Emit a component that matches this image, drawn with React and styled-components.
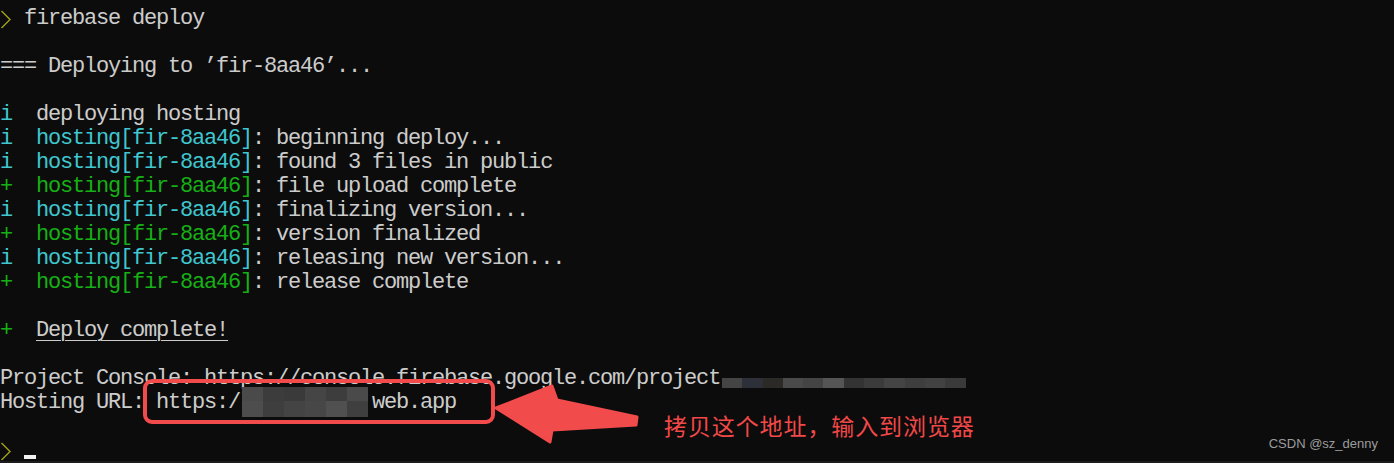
import styled, { createGlobalStyle } from 'styled-components';

const GlobalStyle = createGlobalStyle`
  html, body {
    margin: 0;
    padding: 0;
    background: #0c0c0c;
  }
`

const Screen = styled.div`
  position: relative;
  width: 1394px;
  height: 463px;
  overflow: hidden;
  background: #0c0c0c;
  box-sizing: border-box;
  padding-top: 7px;
  border-bottom: 2px solid #1c1c1c;
  font-family: "Liberation Mono", "DejaVu Sans Mono", monospace;
  font-size: 22px;
  letter-spacing: -1.2px;
  color: #cccccc;
`

const Line = styled.div`
  position: relative;
  height: 24px;
  line-height: 24px;
  white-space: pre;
`

const Cyan = styled.span`
  color: #3fc6cf;
`

const Green = styled.span`
  color: #16b016;
`

const Underlined = styled.span`
  text-decoration: underline;
  text-underline-offset: 4px;
  text-decoration-thickness: 1px;
`

const Prompt = styled.svg`
  display: inline-block;
  width: 12px;
  height: 24px;
  vertical-align: top;
  margin-right: 12px;
`

const Cursor = styled.span`
  display: inline-block;
  width: 12px;
  height: 4px;
  background: #f2f2f2;
  vertical-align: -3px;
`

const Mosaic = styled.div`
  position: absolute;
  left: ${p => p.$left}px;
  top: ${p => p.$top}px;
  display: grid;
  grid-template-columns: ${p => p.$cols};
  grid-auto-rows: ${p => p.$rows};
`

const Cell = styled.div`
  background: ${p => p.$c};
`

const Highlight = styled.div`
  position: absolute;
  left: 143px;
  top: 379px;
  width: 352px;
  height: 45px;
  box-sizing: border-box;
  border: 4px solid #f24b4b;
  border-radius: 9px;
`

const Arrow = styled.svg`
  position: absolute;
  left: 490px;
  top: 380px;
  width: 155px;
  height: 66px;
`

const Note = styled.div`
  position: absolute;
  left: 664px;
  top: 410px;
  font-family: "Noto Sans CJK SC", "Noto Sans", sans-serif;
  font-size: 23px;
  letter-spacing: 0.9px;
  color: #f24848;
  line-height: 30px;
`

const Watermark = styled.div`
  position: absolute;
  right: 16px;
  top: 436px;
  font-family: "Liberation Sans", Arial, sans-serif;
  font-size: 13px;
  letter-spacing: 0;
  color: #9c9c9c;
`

const PromptIcon = () => (
  <Prompt viewBox="0 0 12 24">
    <polyline points="1.5,4 10,12.5 1.5,21" fill="none" stroke="#a3a014" strokeWidth="1.4" />
  </Prompt>
)

const logLines = [
  ['i', 'beginning deploy...'],
  ['i', 'found 3 files in public'],
  ['+', 'file upload complete'],
  ['i', 'finalizing version...'],
  ['+', 'version finalized'],
  ['i', 'releasing new version...'],
  ['+', 'release complete'],
]

const consoleMask = ['#444444', '#2e3039', '#2b2a26', '#4a4a4a', '#444444', '#555555', '#333333', '#3b3b3b', '#444444', '#3e3e3e', '#424242', '#3a3a3a']
const urlMask = [
  '#4a4a4a', '#3c3c3c', '#3a3a3a', '#454545', '#3d3d3d', '#4a4a4a',
  '#4d4d4d', '#3e3e3e', '#444444', '#474747', '#505050', '#3f3f3f',
]

function App() {
  return (
    <>
      <GlobalStyle />
      <Screen>
        <Line><PromptIcon />firebase deploy</Line>
        <Line> </Line>
        <Line>=== Deploying to ’fir-8aa46’...</Line>
        <Line> </Line>
        <Line><Cyan>i</Cyan>  deploying hosting</Line>
        {logLines.map(([mark, text], i) => {
          const Tone = mark === '+' ? Green : Cyan
          return (
            <Line key={i}>
              <Tone>{mark}  hosting[fir-8aa46]</Tone>: {text}
            </Line>
          )
        })}
        <Line> </Line>
        <Line><Green>+</Green>  <Underlined>Deploy complete!</Underlined></Line>
        <Line> </Line>
        <Line>
          Project Console: https://console.firebase.google.com/project.
          <Mosaic $left={722} $top={11} $cols="repeat(12, 20.3px)" $rows="10px">
            {consoleMask.map((c, i) => <Cell key={i} $c={c} />)}
          </Mosaic>
        </Line>
        <Line>
          {'Hosting URL: https:/           web.app'}
          <Mosaic $left={242} $top={-4} $cols="repeat(6, 21px)" $rows="14px 16px">
            {urlMask.map((c, i) => <Cell key={i} $c={c} />)}
          </Mosaic>
        </Line>
        <Line> </Line>
        <Line><PromptIcon /><Cursor /></Line>

        <Highlight />
        <Arrow viewBox="0 0 155 66">
          <polygon
            points="6,28 62,6 67,20 147,37 146,45 62,50 60,62"
            fill="#f24b4b"
            stroke="#f24b4b"
            strokeWidth="3"
            strokeLinejoin="round"
          />
        </Arrow>
        <Note>拷贝这个地址，输入到浏览器</Note>
        <Watermark>CSDN @sz_denny</Watermark>
      </Screen>
    </>
  )
}

export default App
